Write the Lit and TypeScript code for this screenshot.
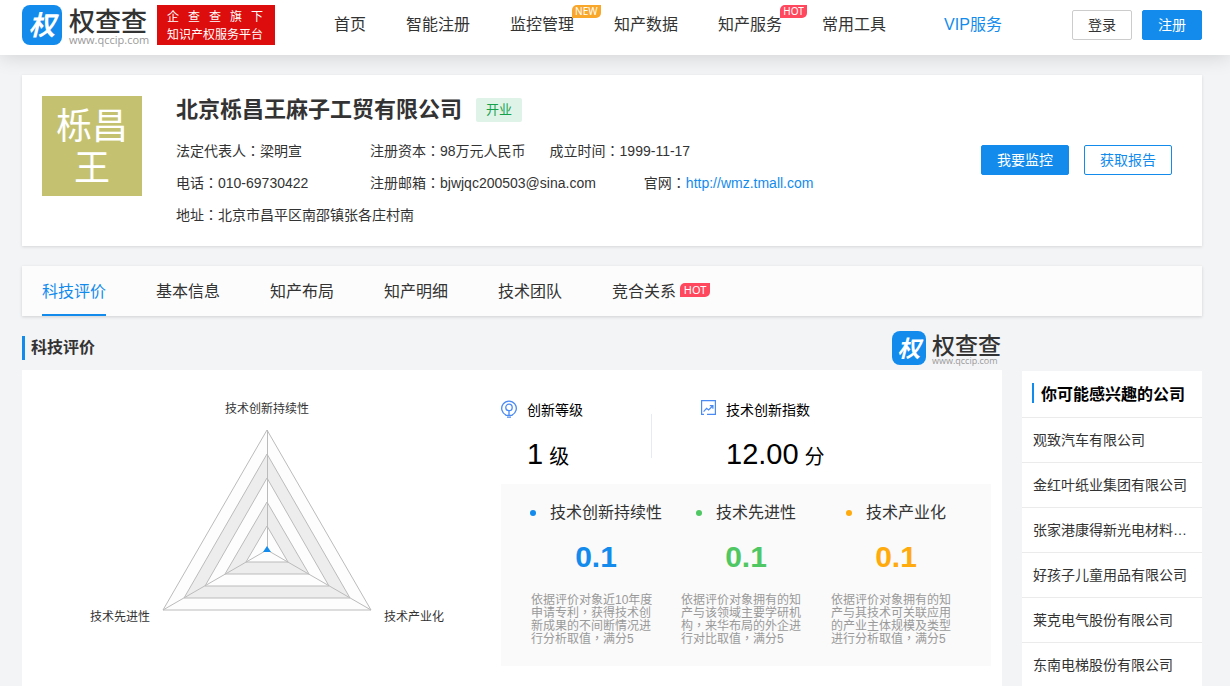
import { LitElement, html, css, svg, nothing } from "lit";
import { customElement, property } from "lit/decorators.js";
import { classMap } from "lit/directives/class-map.js";

const reset = css`
  :host { display: block; }
  *, *::before, *::after { box-sizing: border-box; }
  h1, h2, h3, p, ul, dl, dd { margin: 0; padding: 0; }
  ul { list-style: none; }
  a { color: inherit; text-decoration: none; }
  button { font: inherit; cursor: pointer; padding: 0 0 2px; }
`;

/* Full-width punctuation is set from the face that centres it in its cell. */
const punctuation = css`
  .mark { font-family: "Noto Sans CJK TC", sans-serif; line-height: 0; }
`;
const marks = (text: string) =>
  text.split(/([：，])/).map((part) => (/[：，]/.test(part) ? html`<span class="mark">${part}</span>` : part));

@customElement("brand-logo")
class BrandLogo extends LitElement {
  @property({ type: Boolean, reflect: true }) small = false;
  static styles = [reset, css`
    :host { width: 127px; }
    .logo { display: flex; align-items: center; gap: 7px; height: 40px; }
    .tile {
      flex: none; width: 40px; height: 40px; border-radius: 8px; background: #128bed; color: #fff;
      font-size: 27px; line-height: 42px; font-weight: 700; font-style: italic; text-align: center;
    }
    .words { padding-top: 2px; }
    .name { font-size: 26px; line-height: 28px; font-weight: 500; color: #333; white-space: nowrap; }
    .site { font-family: "Open Sans", sans-serif; font-size: 11px; line-height: 8px; color: #999; }
    :host([small]) { width: 110px; }
    :host([small]) .logo { gap: 6px; height: 34px; }
    :host([small]) .tile { width: 34px; height: 34px; font-size: 23px; line-height: 36px; }
    :host([small]) .name { font-size: 23px; line-height: 24px; }
    :host([small]) .site { font-size: 9px; line-height: 6px; }
  `];
  render() {
    return html`<div class="logo">
      <div class="tile">权</div>
      <div class="words"><div class="name">权查查</div><div class="site">www.qccip.com</div></div>
    </div>`;
  }
}

@customElement("corner-badge")
class CornerBadge extends LitElement {
  @property() tone = "hot";
  @property({ type: Boolean, reflect: true }) large = false;
  static styles = [reset, css`
    .badge {
      padding: 0 3px; border-radius: 5px 0 5px 0; color: #fff;
      font: 10px/13px "Noto Sans", sans-serif; text-align: center; min-width: 27px;
    }
    :host([large]) .badge { font-size: 11px; line-height: 14px; min-width: 30px; }
    .hot { background: #ff475d; }
    .new { background: #f9a72b; }
  `];
  render() {
    return html`<div class="badge ${this.tone}">${this.tone.toUpperCase()}</div>`;
  }
}

@customElement("site-header")
class SiteHeader extends LitElement {
  items = [
    { text: "首页" },
    { text: "智能注册" },
    { text: "监控管理", badge: "new" },
    { text: "知产数据" },
    { text: "知产服务", badge: "hot" },
    { text: "常用工具" },
  ];
  static styles = [reset, css`
    .bar {
      display: flex; align-items: center; height: 55px; padding: 0 28px 5px 22px;
      background: #fff; box-shadow: 0 2px 20px rgba(0, 0, 0, .14);
    }
    .slogan {
      margin-left: 8px; padding: 3px 12px 1px 10px; background: #dd0d0d; color: #fff;
      font-size: 12px; line-height: 18px; white-space: nowrap;
    }
    .slogan div:first-child { text-align-last: justify; }
    nav { display: flex; gap: 40px; margin-left: 59px; font-size: 16px; line-height: 24px; white-space: nowrap; }
    nav a { position: relative; color: #333; }
    nav .vip { margin-left: 18px; color: #128bed; }
    corner-badge { position: absolute; left: calc(100% - 2px); top: -8px; }
    .actions { display: flex; gap: 10px; margin-left: auto; }
    button { width: 60px; height: 30px; border-radius: 2px; font-size: 14px; }
    .login { background: #fff; border: 1px solid #ccc; color: #333; }
    .join { background: #128bed; border: 1px solid #128bed; color: #fff; }
  `];
  render() {
    return html`<header class="bar">
      <brand-logo></brand-logo>
      <div class="slogan"><div>企 查 查 旗 下</div><div>知识产权服务平台</div></div>
      <nav>
        ${this.items.map((i) => html`<a href="#">${i.text}${i.badge ? html`<corner-badge tone=${i.badge}></corner-badge>` : nothing}</a>`)}
        <a class="vip" href="#">VIP服务</a>
      </nav>
      <div class="actions"><button class="login">登录</button><button class="join">注册</button></div>
    </header>`;
  }
}

@customElement("company-card")
class CompanyCard extends LitElement {
  static styles = [reset, punctuation, css`
    .card {
      display: flex; align-items: flex-start; padding: 21px 30px 15px 20px;
      background: #fff; box-shadow: 0 1px 3px rgba(0, 0, 0, .12);
    }
    .avatar {
      display: flex; align-items: center; justify-content: center; width: 100px; height: 100px;
      padding: 4px 14px 0; background: #c4c271; color: #fff; font-size: 36px; line-height: 42px; text-align: center;
    }
    .body { flex: 1; margin-left: 34px; color: #333; }
    .title { display: flex; align-items: center; gap: 14px; height: 28px; }
    h1 { font-size: 22px; line-height: 28px; font-weight: 700; }
    .status {
      padding: 0 10px; border-radius: 2px; background: #dff3e9; color: #15a04a;
      font-size: 13px; line-height: 24px;
    }
    .facts { margin-top: 11px; font-size: 14px; line-height: 32px; white-space: nowrap; }
    .row { display: flex; gap: 24px; }
    .row.wide { gap: 48px; }
    .first { width: 170px; }
    .wide .first { width: 146px; }
    .facts a { color: #128bed; }
    .actions { display: flex; gap: 15px; align-self: center; padding-bottom: 8px; }
    button { width: 88px; height: 30px; border-radius: 2px; border: 1px solid #128bed; font-size: 14px; }
    .primary { background: #128bed; color: #fff; }
    .outline { background: #fff; color: #128bed; }
  `];
  render() {
    return html`<section class="card">
      <div class="avatar">栎昌王</div>
      <div class="body">
        <div class="title"><h1>北京栎昌王麻子工贸有限公司</h1><span class="status">开业</span></div>
        <div class="facts">
          <div class="row"><div class="first">${marks("法定代表人：梁明宣")}</div><div>${marks("注册资本：98万元人民币")}</div><div>${marks("成立时间：1999-11-17")}</div></div>
          <div class="row wide"><div class="first">${marks("电话：010-69730422")}</div><div>${marks("注册邮箱：bjwjqc200503@sina.com")}</div><div>${marks("官网：")}<a href="http://wmz.tmall.com">http://wmz.tmall.com</a></div></div>
          <div class="row"><div>${marks("地址：北京市昌平区南邵镇张各庄村南")}</div></div>
        </div>
      </div>
      <div class="actions"><button class="primary">我要监控</button><button class="outline">获取报告</button></div>
    </section>`;
  }
}

@customElement("section-tabs")
class SectionTabs extends LitElement {
  tabs = ["科技评价", "基本信息", "知产布局", "知产明细", "技术团队", "竞合关系"];
  static styles = [reset, css`
    nav {
      display: flex; gap: 50px; padding: 0 20px; background: #fcfcfc;
      box-shadow: 0 1px 3px rgba(0, 0, 0, .15); font-size: 16px; color: #333; white-space: nowrap;
    }
    a { display: flex; align-items: center; gap: 4px; height: 50px; border-bottom: 2px solid transparent; }
    .active { color: #128bed; border-color: #128bed; }
  `];
  render() {
    return html`<nav>${this.tabs.map((t, i) => html`<a href="#" class=${classMap({ active: i === 0 })}>${t}${i === 5 ? html`<corner-badge large></corner-badge>` : nothing}</a>`)}</nav>`;
  }
}

@customElement("score-radar")
class ScoreRadar extends LitElement {
  static styles = [reset, css`
    svg { display: block; width: 100%; height: auto; }
    text { font-size: 12px; fill: #333; text-anchor: middle; }
    .ring { stroke: #bbb; }
    .light { fill: #fdfdfd; }
    .dark { fill: #ededed; }
    .axis { stroke: #bbb; }
    .value { fill: #128bed; }
  `];
  points(r: number) {
    const dx = Math.round(r * 0.866), dy = r / 2;
    return `180,${160 - r} ${180 + dx},${160 + dy} ${180 - dx},${160 + dy}`;
  }
  render() {
    return html`<svg viewBox="0 0 360 240" role="img" aria-label="科技评价">
      ${[120, 96, 72, 48, 24].map((r, i) => svg`<polygon class="ring ${i % 2 ? "dark" : "light"}" points=${this.points(r)}></polygon>`)}
      <path class="axis" d="M180.5 160V40M180 160L284 220M180 160L76 220" />
      <polygon class="value" points="180,156 184,162 176,162" />
      <text x="180" y="23">技术创新持续性</text>
      <text x="33" y="231">技术先进性</text>
      <text x="327" y="231">技术产业化</text>
    </svg>`;
  }
}

@customElement("score-panel")
class ScorePanel extends LitElement {
  scores = [
    { tone: "blue", name: "技术创新持续性", value: "0.1", note: "依据评价对象近10年度申请专利，获得技术创新成果的不间断情况进行分析取值，满分5" },
    { tone: "green", name: "技术先进性", value: "0.1", note: "依据评价对象拥有的知产与该领域主要学研机构，来华布局的外企进行对比取值，满分5" },
    { tone: "amber", name: "技术产业化", value: "0.1", note: "依据评价对象拥有的知产与其技术可关联应用的产业主体规模及类型进行分析取值，满分5" },
  ];
  static styles = [reset, punctuation, css`
    .panel { display: flex; height: 100%; padding: 20px 11px; background: #fff; }
    .chart { flex: 1; }
    score-radar { width: 360px; margin: 0 auto; }
    .detail { width: 490px; padding-top: 10px; }
    .totals { display: flex; color: #000; }
    .total { display: flex; gap: 9px; width: 199px; height: 84px; }
    .total svg { flex: none; width: 17px; height: 20px; }
    h3 { font-size: 14px; line-height: 20px; font-weight: 400; }
    .figure { margin-top: 16px; font-size: 29px; line-height: 36px; white-space: nowrap; }
    .figure small { margin-left: 6px; font-size: 20px; line-height: 20px; }
    .split { border-left: 1px solid #e3ebf3; height: 44px; margin: 14px 48px 0 -49px; }
    .scores { display: flex; padding: 17px 20px 20px; background: #fafafa; }
    .score { flex: 1; --tone: #128bed; }
    .green { --tone: #4fc763; }
    .amber { --tone: #ffaa0d; }
    h3.name { display: flex; align-items: center; justify-content: center; gap: 14px; font-size: 16px; line-height: 24px; color: #333; white-space: nowrap; }
    .name::before { content: ""; width: 6px; height: 6px; border-radius: 50%; background: var(--tone); }
    .value { margin-top: 14px; font-size: 30px; line-height: 36px; font-weight: 700; text-align: center; color: var(--tone); }
    .note { margin-top: 19px; padding: 0 10px; font-size: 12px; line-height: 13px; color: #999; }
  `];
  render() {
    return html`<div class="panel">
      <div class="chart"><score-radar></score-radar></div>
      <div class="detail">
        <div class="totals">
          <div class="total">
            <svg viewBox="0 0 17 20" fill="none" stroke="#4a8af4" stroke-width="1.3"><path d="M5 15.1A7.3 7.3 0 1 1 11 15.1" /><circle cx="8" cy="7.4" r="3.2" /><path d="M8 10.6v4.8M4.6 15.4h6.8M6 17.2h4" /></svg>
            <div><h3>创新等级</h3><div class="figure">1<small>级</small></div></div>
          </div>
          <div class="split"></div>
          <div class="total">
            <svg viewBox="0 0 17 20" fill="none" stroke="#4a8af4" stroke-width="1.2"><path d="M4 14.4H1.6V.6H15.4V14.4H7M3.6 11.6L6.6 8.4L8.6 10L12.6 6M9.8 5.7H12.9V8.8" /></svg>
            <div><h3>技术创新指数</h3><div class="figure">12.00<small>分</small></div></div>
          </div>
        </div>
        <div class="scores">
          ${this.scores.map((s) => html`<div class="score ${s.tone}"><h3 class="name">${s.name}</h3><div class="value">${s.value}</div><p class="note">${marks(s.note)}</p></div>`)}
        </div>
      </div>
    </div>`;
  }
}

@customElement("company-suggestions")
class CompanySuggestions extends LitElement {
  companies = ["观致汽车有限公司", "金红叶纸业集团有限公司", "张家港康得新光电材料有限公司", "好孩子儿童用品有限公司", "莱克电气股份有限公司", "东南电梯股份有限公司"];
  static styles = [reset, css`
    aside { background: #fff; }
    h2 { display: flex; align-items: center; gap: 7px; padding: 0 10px 2px; height: 46px; font-size: 16px; color: #000; white-space: nowrap; }
    h2::before { content: ""; width: 2px; height: 20px; background: #128bed; }
    a {
      display: block; padding: 0 11px; border-top: 1px solid #ebebeb; font-size: 14px; line-height: 44px; color: #333;
      overflow: hidden; white-space: nowrap; text-overflow: ellipsis;
    }
  `];
  render() {
    return html`<aside><h2>你可能感兴趣的公司</h2><ul>${this.companies.map((c) => html`<li><a href="#">${c}</a></li>`)}</ul></aside>`;
  }
}

@customElement("app-root")
class AppRoot extends LitElement {
  static styles = [reset, css`
    :host { min-height: 100vh; background: #f3f4f6; font-family: "Liberation Sans", "Noto Sans CJK SC", sans-serif; }
    main { padding: 20px 28px 0 22px; }
    section-tabs { margin-top: 20px; }
    .columns { display: grid; grid-template-columns: 1fr 180px; column-gap: 20px; }
    .heading { display: flex; align-items: center; justify-content: space-between; height: 54px; padding-top: 10px; }
    h2 { padding-left: 6px; border-left: 3px solid #128bed; font-size: 16px; line-height: 24px; color: #333; }
    score-panel, company-suggestions { grid-row: 2; }
    company-suggestions { padding-top: 1px; }
  `];
  render() {
    return html`<site-header></site-header>
      <main>
        <company-card></company-card>
        <section-tabs></section-tabs>
        <div class="columns">
          <div class="heading"><h2>科技评价</h2><brand-logo small></brand-logo></div>
          <score-panel></score-panel>
          <company-suggestions></company-suggestions>
        </div>
      </main>`;
  }
}
